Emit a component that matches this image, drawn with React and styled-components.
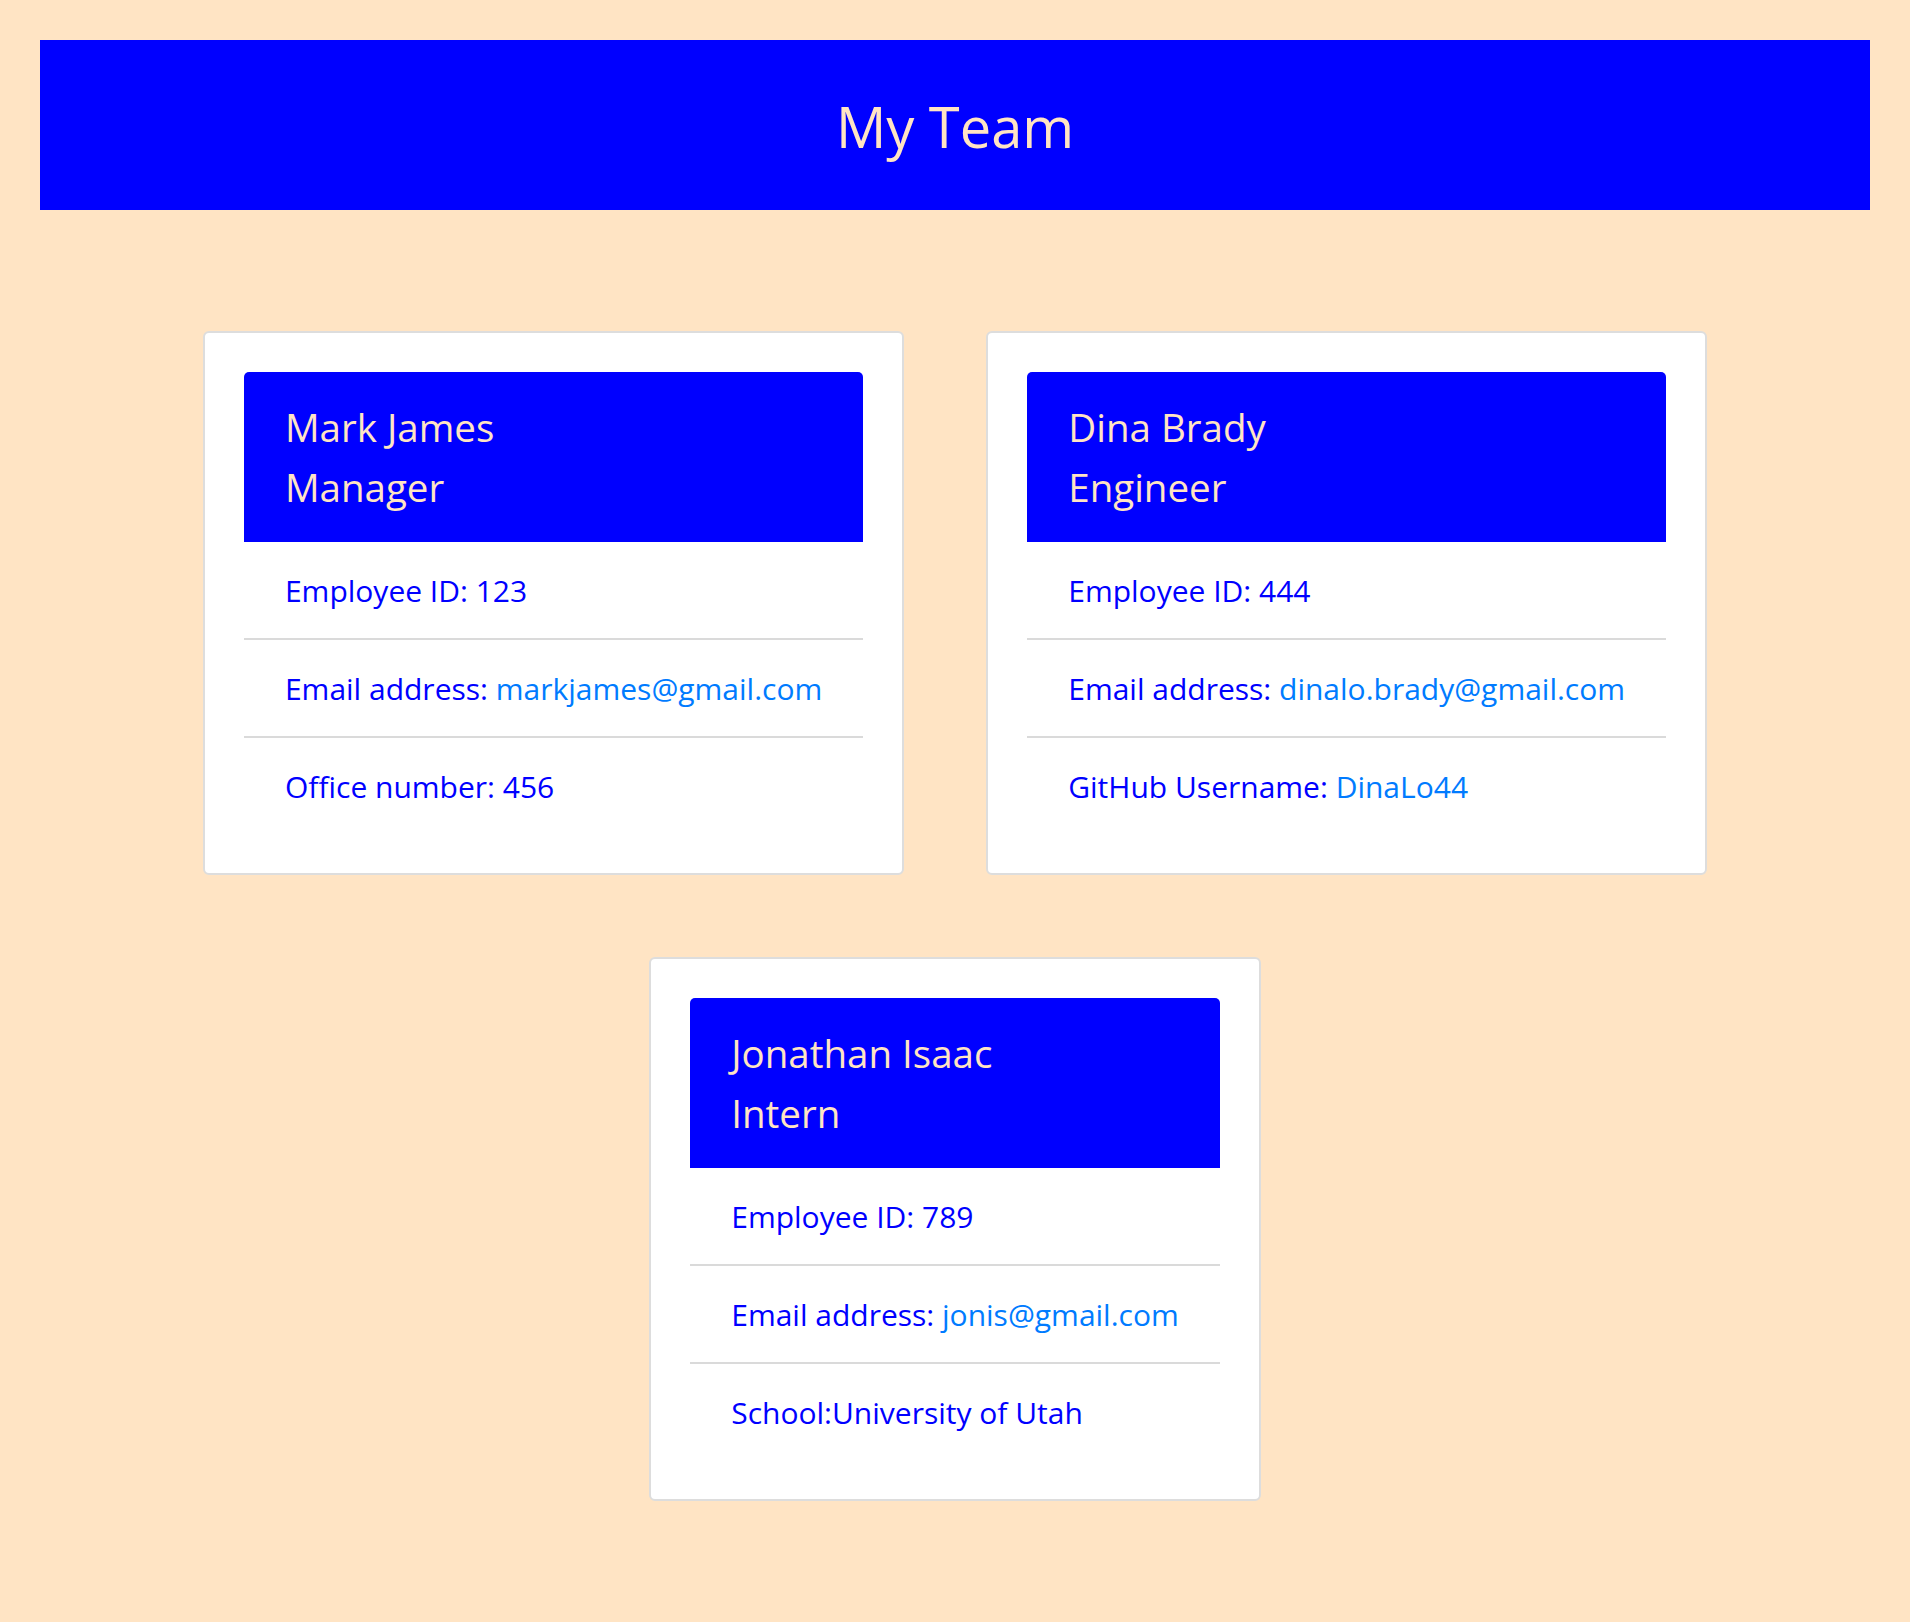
import React from 'react';
import styled, { createGlobalStyle } from 'styled-components';

const GlobalStyle = createGlobalStyle`
  html, body {
    margin: 0;
    padding: 0;
    background-color: bisque;
  }

  body {
    min-height: 1622px;
    font-family: 'Open Sans', 'Noto Sans', sans-serif;
  }

  * {
    box-sizing: border-box;
  }
`;

const Page = styled.div`
  padding: 40px;
`;

const Jumbotron = styled.header`
  background-color: #0000ff;
  color: bisque;
  text-align: center;
  padding: 53px 0 51px;
`;

const Title = styled.h1`
  margin: 0;
  font-size: 56px;
  font-weight: 400;
  line-height: 66px;
`;

const Team = styled.section`
  display: flex;
  flex-wrap: wrap;
  justify-content: center;
  gap: 82px;
  margin: 121px -40px 0;
`;

const Card = styled.article`
  display: flex;
  flex-direction: column;
  background: #fff;
  border: 2px solid #dddddd;
  border-radius: 6px;
  padding: 39px;
`;

const CardHeader = styled.div`
  background-color: #0000ff;
  color: bisque;
  border-radius: 5px 5px 0 0;
  padding: 25px 41px;
`;

const HeaderLine = styled.div`
  font-size: 38.5px;
  line-height: 60px;
`;

const List = styled.ul`
  list-style: none;
  margin: 0;
  padding: 0;
`;

const Item = styled.li`
  color: #0000ff;
  font-size: 30px;
  line-height: 45px;
  padding: 26px 41px 25px;
  white-space: nowrap;
  border-bottom: 2px solid #dadada;

  &:last-child {
    border-bottom: none;
  }
`;

const Link = styled.a`
  color: #007bff;
  text-decoration: none;
`;

const team = [
  {
    name: 'Mark James',
    role: 'Manager',
    id: 123,
    email: 'markjames@gmail.com',
    extra: <>Office number: 456</>
  },
  {
    name: 'Dina Brady',
    role: 'Engineer',
    id: 444,
    email: 'dinalo.brady@gmail.com',
    extra: <>GitHub Username: <Link href="#">DinaLo44</Link></>
  },
  {
    name: 'Jonathan Isaac',
    role: 'Intern',
    id: 789,
    email: 'jonis@gmail.com',
    extra: <>School:University of Utah</>
  }
];

function EmployeeCard({ member }) {
  return (
    <Card>
      <CardHeader>
        <HeaderLine>{member.name}</HeaderLine>
        <HeaderLine>{member.role}</HeaderLine>
      </CardHeader>
      <List>
        <Item>Employee ID: {member.id}</Item>
        <Item>
          Email address: <Link href={`mailto:${member.email}`}>{member.email}</Link>
        </Item>
        <Item>{member.extra}</Item>
      </List>
    </Card>
  );
}

export default function App() {
  return (
    <Page>
      <GlobalStyle />
      <Jumbotron>
        <Title>My Team</Title>
      </Jumbotron>
      <Team>
        {team.map((member) => (
          <EmployeeCard key={member.id} member={member} />
        ))}
      </Team>
    </Page>
  );
}
